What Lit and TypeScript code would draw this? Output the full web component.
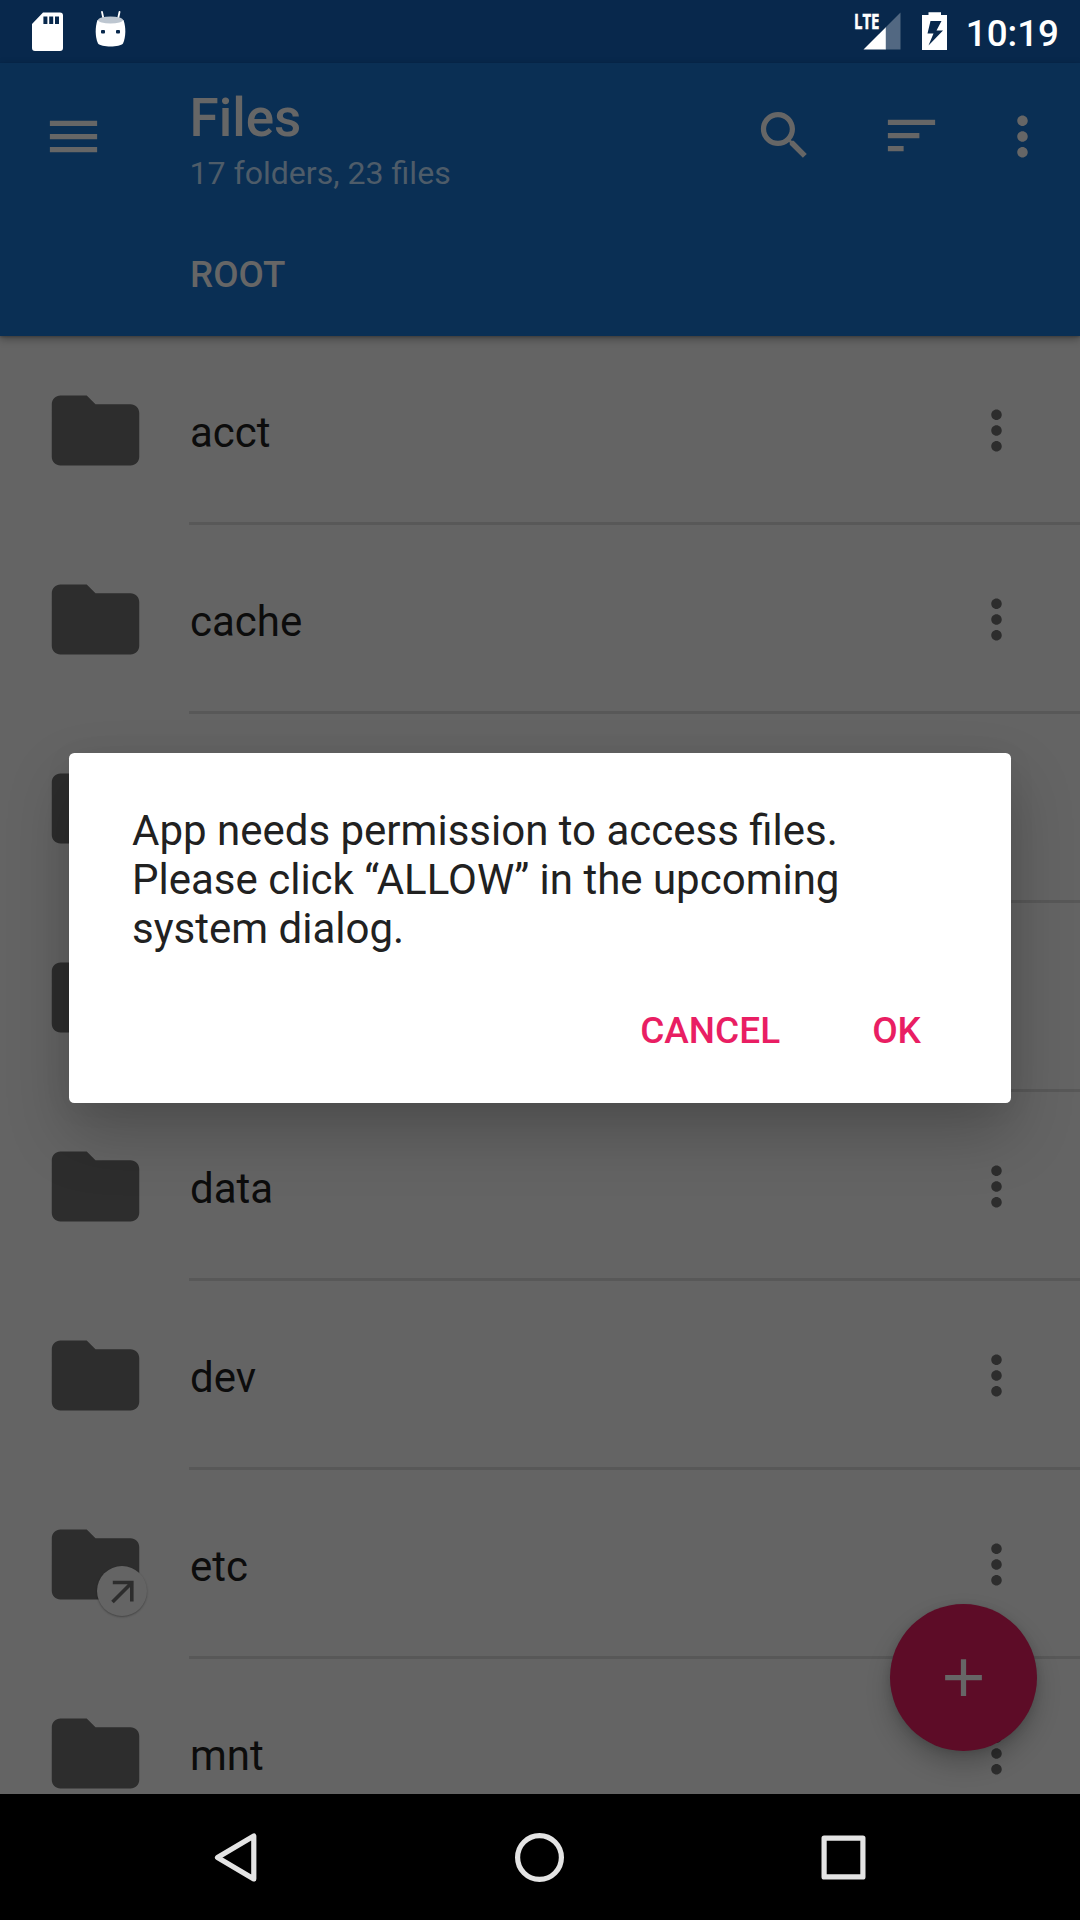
import { LitElement, html, css, svg } from "lit";
import { customElement, property } from "lit/decorators.js";

const PATHS: Record<string, string> = {
  menu: "M3 18h18v-2H3v2zm0-5h18v-2H3v2zm0-7v2h18V6H3z",
  search:
    "M15.5 14h-.79l-.28-.27C15.41 12.59 16 11.11 16 9.5 16 5.91 13.09 3 9.5 3S3 5.91 3 9.5 5.91 16 9.5 16c1.61 0 3.09-.59 4.23-1.57l.27.28v.79l5 4.99L20.49 19l-4.99-5zm-6 0C7.01 14 5 11.99 5 9.5S7.01 5 9.5 5 14 7.01 14 9.5 11.99 14 9.5 14z",
  sort: "M3 18h6v-2H3v2zM3 6v2h18V6H3zm0 7h12v-2H3v2z",
  more: "M12 8c1.1 0 2-.9 2-2s-.9-2-2-2-2 .9-2 2 .9 2 2 2zm0 2c-1.1 0-2 .9-2 2s.9 2 2 2 2-.9 2-2-.9-2-2-2zm0 6c-1.1 0-2 .9-2 2s.9 2 2 2 2-.9 2-2-.9-2-2-2z",
  folder:
    "M10 4H4c-1.1 0-1.99.9-1.99 2L2 18c0 1.1.9 2 2 2h16c1.1 0 2-.9 2-2V8c0-1.1-.9-2-2-2h-8l-2-2z",
  add: "M19 13h-6v6h-2v-6H5v-2h6V5h2v6h6v2z",
};

const icon = (name: string) =>
  html`<svg class="icon" viewBox="0 0 24 24" aria-hidden="true">${svg`<path d=${PATHS[name]} />`}</svg>`;

interface Entry {
  name: string;
  link?: boolean;
}

// Rows without a name sit behind the dialog.
const ENTRIES: Entry[] = [
  { name: "acct" },
  { name: "cache" },
  { name: "" },
  { name: "" },
  { name: "data" },
  { name: "dev" },
  { name: "etc", link: true },
  { name: "mnt" },
];

const shared = css`
  * {
    box-sizing: border-box;
  }
  .icon {
    display: block;
    width: 63px;
    height: 63px;
    fill: currentColor;
    flex: none;
  }
`;

@customElement("status-bar")
class StatusBar extends LitElement {
  static styles = [
    shared,
    css`
      :host {
        display: flex;
        align-items: flex-start;
        height: 63px;
        background: #08284c;
        color: #fff;
        padding: 0 21px 0 0;
      }
      .glyphs {
        display: block;
        flex: none;
      }
      .spacer {
        flex: 1;
      }
      .time {
        font: 500 36.75px/43px Roboto, sans-serif;
        margin: 12px 0 0 18px;
      }
      .lte {
        font: 700 21px "Open Sans", sans-serif;
      }
    `,
  ];
  render() {
    return html`
      <svg class="glyphs" width="140" height="63" viewBox="0 0 140 63">
        <path
          fill="#fff"
          fill-rule="evenodd"
          d="M43 12.6H60a3 3 0 0 1 3 3V48a3 3 0 0 1-3 3H35a3 3 0 0 1-3-3V24zM43.4 16.5V24H47.4V16.5zM49.2 16.5V24H53.2V16.5zM55 16.5V24H59V16.5z"
        />
        <path stroke="#fff" stroke-width="1.8" stroke-linecap="round" d="M102 12l1.500 7M119.500 12l-1.500 7" />
        <path
          fill="#fff"
          d="M97.500 20C95 27 95 37 98 43.500 101 47.500 120 47.500 123 43.500 126 37 126 27 123.500 20z"
        />
        <ellipse cx="110.500" cy="20" rx="12.500" ry="3.500" fill="#bdc6d0" />
        <rect x="101" y="30" width="4" height="3.600" rx="1" fill="#08284c" />
        <rect x="116" y="30" width="4" height="3.600" rx="1" fill="#08284c" />
      </svg>
      <span class="spacer"></span>
      <svg class="glyphs" width="98" height="63" viewBox="850 0 98 63">
        <text class="lte" x="854" y="29" fill="#fff" stroke="#fff" stroke-width="0.500" textLength="25.500" lengthAdjust="spacingAndGlyphs">LTE</text>
        <path fill="#fff" fill-opacity=".3" d="M900.500 12.600V49.500H885.500V27.600z" />
        <path fill="#fff" d="M863.500 49.500L885.800 27.200V49.500z" />
        <path
          fill="#fff"
          fill-rule="evenodd"
          d="M928.500 12.200H941V15H947V50H922V15H928.500zM930.500 21L927.500 33.500H933.500L928.500 45.500L943 30.500H936.500L941.500 21z"
        />
      </svg>
      <span class="time">10:19</span>
    `;
  }
}

@customElement("app-header")
class AppHeader extends LitElement {
  static styles = [
    shared,
    css`
      :host {
        display: flex;
        flex-direction: column;
        height: 273px;
        background: #0a2f54;
        color: #666;
        font-family: Roboto, sans-serif;
        position: relative;
        box-shadow: 0 3px 8px rgba(0, 0, 0, 0.32), 0 1px 2px rgba(0, 0, 0, 0.2);
      }
      .bar {
        display: flex;
        height: 147px;
        padding-left: 42px;
        align-items: center;
      }
      .titles {
        flex: 1;
        padding: 6px 0 0 84.500px;
      }
      .title {
        font-size: 53px;
        line-height: 61px;
        font-weight: 500;
      }
      .subtitle {
        font-size: 32.100px;
        line-height: 37px;
        margin-top: 6px;
        color: #4e5c69;
      }
      .actions {
        display: flex;
        padding-right: 26px;
      }
      .actions .icon {
        margin-top: -1px;
      }
      .actions .sort {
        margin: 0 48px 0 64px;
      }
      .actions .more .icon {
        margin-top: 0;
      }
      .crumb {
        padding-left: 190px;
        line-height: 43px;
        font-size: 36.75px;
        font-weight: 500;
        margin-top: 43px;
      }
    `,
  ];
  render() {
    return html`
      <div class="bar">
        ${icon("menu")}
        <div class="titles">
          <div class="title">Files</div>
          <div class="subtitle">17 folders, 23 files</div>
        </div>
        <div class="actions">
          <div class="search">${icon("search")}</div>
          <div class="sort">${icon("sort")}</div>
          <div class="more">${icon("more")}</div>
        </div>
      </div>
      <div class="crumb">ROOT</div>
    `;
  }
}

@customElement("file-row")
class FileRow extends LitElement {
  @property() name = "";
  @property({ type: Boolean }) link = false;

  static styles = [
    shared,
    css`
      :host {
        display: flex;
        align-items: center;
        height: 189px;
        flex: none;
        padding: 0 52px 0 42.600px;
        font-family: Roboto, sans-serif;
      }
      .thumb {
        position: relative;
        width: 105px;
        height: 105px;
        flex: none;
        color: #2d2d2d;
      }
      .thumb .icon {
        width: 105px;
        height: 105px;
      }
      .badge {
        position: absolute;
        right: 0.600px;
        bottom: 1px;
        width: 50px;
        height: 50px;
        border-radius: 50%;
        background: #646464;
        box-shadow: 0 1px 2px rgba(0, 0, 0, 0.32);
      }
      .badge svg {
        display: block;
      }
      .body {
        flex: 1;
        height: 189px;
        margin-left: 41.400px;
        margin-right: -52px;
        padding-right: 52px;
        border-bottom: 3px solid #585858;
        display: flex;
        align-items: center;
        justify-content: space-between;
        color: #0c0c0c;
        font-size: 42px;
        line-height: 49px;
      }
      .name {
        padding: 7px 0 0 1px;
      }
      .more {
        color: #2d2d2d;
        padding-top: 3px;
      }
    `,
  ];
  render() {
    return html`
      <div class="thumb">
        ${icon("folder")}
        ${this.link
          ? html`<div class="badge">
              <svg width="50" height="50" viewBox="0 0 50 50">
                <path d="M15.800 16.500H34.800V35.500M34.500 17L15.500 36" fill="none" stroke="#2d2d2d" stroke-width="3.600" />
              </svg>
            </div>`
          : ""}
      </div>
      <div class="body">
        <span class="name">${this.name}</span>
        <span class="more">${icon("more")}</span>
      </div>
    `;
  }
}

@customElement("permission-dialog")
class PermissionDialog extends LitElement {
  static styles = [
    shared,
    css`
      :host {
        display: flex;
        flex-direction: column;
        width: 942px;
        height: 350px;
        border-radius: 5.250px;
        background: #fff;
        padding: 53px 63px 0;
        font-family: Roboto, sans-serif;
        box-shadow: 0 30px 63px rgba(0, 0, 0, 0.22), 0 4px 30px rgba(0, 0, 0, 0.05);
      }
      .message {
        margin: 0;
        color: #212121;
        font-size: 42px;
        line-height: 49.200px;
        letter-spacing: 0;
      }
      .buttons {
        display: flex;
        justify-content: flex-end;
        gap: 92px;
        padding-right: 27px;
        margin-top: 55px;
        color: #e91e63;
        font-size: 37px;
        line-height: 43px;
        font-weight: 500;
      }
    `,
  ];
  render() {
    return html`
      <p class="message">
        App needs permission to access files.<br />Please click “ALLOW” in the upcoming<br />system dialog.
      </p>
      <div class="buttons"><span>CANCEL</span><span>OK</span></div>
    `;
  }
}

@customElement("nav-bar")
class NavBar extends LitElement {
  static styles = [
    shared,
    css`
      :host {
        display: flex;
        justify-content: center;
        align-items: center;
        gap: 241px;
        height: 126px;
        padding-right: 1px;
        background: #000;
      }
      .key {
        display: block;
        width: 63px;
        height: 63px;
        fill: none;
        stroke: #e4e4e4;
        stroke-linejoin: round;
      }
    `,
  ];
  render() {
    return html`
      <svg class="key" viewBox="0 0 63 63"><path d="M49.800 10V53L13.500 31.500z" stroke-width="5.200" /></svg>
      <svg class="key" viewBox="0 0 63 63"><circle cx="31.500" cy="31.500" r="21.900" stroke-width="5.200" /></svg>
      <svg class="key" viewBox="0 0 63 63"><rect x="12.100" y="12.100" width="38.800" height="38.800" stroke-width="5.200" /></svg>
    `;
  }
}

@customElement("app-root")
class AppRoot extends LitElement {
  static styles = [
    shared,
    css`
      :host {
        display: flex;
        flex-direction: column;
        position: relative;
        width: 1080px;
        height: 1920px;
        overflow: hidden;
        background: #646464;
      }
      status-bar,
      app-header,
      nav-bar {
        flex: none;
      }
      .list {
        flex: 1;
        min-height: 0;
        overflow: hidden;
        display: flex;
        flex-direction: column;
      }
      .fab {
        position: absolute;
        right: 43px;
        bottom: 169px;
        width: 147px;
        height: 147px;
        border-radius: 50%;
        background: #5d0c27;
        color: #666;
        display: flex;
        align-items: center;
        justify-content: center;
        box-shadow: 0 13px 24px rgba(0, 0, 0, 0.22), 0 2px 8px rgba(0, 0, 0, 0.12);
      }
      .layer {
        position: absolute;
        inset: 63px 0 127px;
        display: flex;
        align-items: center;
        justify-content: center;
      }
    `,
  ];
  render() {
    return html`
      <status-bar></status-bar>
      <app-header></app-header>
      <div class="list">
        ${ENTRIES.map((e) => html`<file-row .name=${e.name} .link=${!!e.link}></file-row>`)}
      </div>
      <nav-bar></nav-bar>
      <div class="fab">${icon("add")}</div>
      <div class="layer"><permission-dialog></permission-dialog></div>
    `;
  }
}
